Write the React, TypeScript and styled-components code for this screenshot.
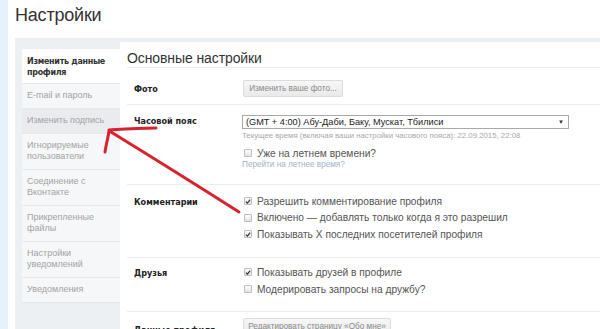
import { createGlobalStyle, styled } from "styled-components"

const GlobalStyle = createGlobalStyle`
  html, body {
    margin: 0;
    padding: 0;
    background: #ffffff;
    overflow: hidden;
  }
  body {
    font-family: "Liberation Sans", Arial, sans-serif;
  }
`

const menu = [
  { text: "Изменить данные профиля", active: true },
  { text: "E-mail и пароль" },
  { text: "Изменить подпись", hover: true },
  { text: "Игнорируемые пользователи" },
  { text: "Соединение с Вконтакте" },
  { text: "Прикрепленные файлы" },
  { text: "Настройки уведомлений" },
  { text: "Уведомления" },
]

function Check ({ checked }: { checked?: boolean }): JSX.Element {
  return (
    <Box>
      {checked && (
        <svg width="7" height="7" viewBox="0 0 7 7">
          <path d="M1 3.6 L2.8 5.4 L6 1.2" fill="none" stroke="#333" strokeWidth="1.4" />
        </svg>
      )}
    </Box>
  )
}

function App (): JSX.Element {
  return (
    <Page>
      <GlobalStyle />
      <Strip />
      <Content>
        <Title>Настройки</Title>
        <Panel>
          <Sidebar>
            {menu.map((item) => (
              <MenuItem key={item.text} active={item.active} hover={item.hover}>
                {item.text}
              </MenuItem>
            ))}
          </Sidebar>
          <Main>
            <MainTitle>Основные настройки</MainTitle>
            <Row pad={12} height={37}>
              <Label>Фото</Label>
              <Controls>
                <Button width={100}>Изменить ваше фото...</Button>
              </Controls>
            </Row>
            <Row pad={10} height={80}>
              <Label top={1}>Часовой пояс</Label>
              <Controls>
                <Select>
                  <span>(GMT + 4:00) Абу-Даби, Баку, Мускат, Тбилиси</span>
                  <Caret>▼</Caret>
                </Select>
                <Hint>Текущее время (включая ваши настройки часового пояса): 22.09.2015, 22:08</Hint>
                <CheckRow top={6}>
                  <Check />
                  <span>Уже на летнем времени?</span>
                </CheckRow>
                <LinkText>Перейти на летнее время?</LinkText>
              </Controls>
            </Row>
            <Row pad={10} height={73}>
              <Label top={2}>Комментарии</Label>
              <Controls>
                <CheckRow>
                  <Check checked />
                  <span>Разрешить комментирование профиля</span>
                </CheckRow>
                <CheckRow top={4.5}>
                  <Check />
                  <span>Включено — добавлять только когда я это разрешил</span>
                </CheckRow>
                <CheckRow top={4.5}>
                  <Check checked />
                  <span>Показывать X последних посетителей профиля</span>
                </CheckRow>
              </Controls>
            </Row>
            <Row pad={8} height={54}>
              <Label top={2}>Друзья</Label>
              <Controls>
                <CheckRow>
                  <Check checked />
                  <span>Показывать друзей в профиле</span>
                </CheckRow>
                <CheckRow top={5}>
                  <Check />
                  <span>Модерировать запросы на дружбу?</span>
                </CheckRow>
              </Controls>
            </Row>
            <Row pad={6} height={40}>
              <Label top={7}>Данные профиля</Label>
              <Controls>
                <Button width={148}>Редактировать страницу «Обо мне»</Button>
              </Controls>
            </Row>
          </Main>
        </Panel>
      </Content>
      <Arrow width="600" height="329" viewBox="0 0 600 329">
        <g fill="none" stroke="#d8222e" strokeWidth="3" strokeLinecap="round">
          <path d="M109 130 C125 129 140 128 156 128" />
          <path d="M109 131 C108 138 106 145 105 152" />
          <path d="M111 132 C150 156 195 184 239 212" />
        </g>
      </Arrow>
    </Page>
  )
}

export default App

const Page = styled.div`
  position: relative;
  display: flex;
  width: 600px;
  height: 329px;
  overflow: hidden;
`

const Strip = styled.div`
  width: 8px;
  flex: none;
  background: #e6f2fb;
`

const Content = styled.div`
  flex: 1;
  padding-left: 7px;
  display: flex;
  flex-direction: column;
`

const Title = styled.div`
  flex: none;
  height: 38px;
  box-sizing: border-box;
  padding-top: 5px;
  font-size: 18px;
  color: #333;
  letter-spacing: -0.2px;
`

const Panel = styled.div`
  flex: 1;
  display: flex;
  background: #edf0f2;
  padding-left: 7px;
  padding-top: 4px;
`

const Sidebar = styled.div`
  width: 98px;
  flex: none;
  margin-top: 7px;
  align-self: flex-start;
  display: flex;
  flex-direction: column;
`

const MenuItem = styled.div<{ active?: boolean; hover?: boolean }>`
  padding: ${(p) => (p.active ? "7px 5px 5px 5px" : "6px 5px 7px 5px")};
  font-size: ${(p) => (p.active ? "8px" : "9px")};
  line-height: 11px;
  font-weight: ${(p) => (p.active ? "bold" : "normal")};
  font-family: ${(p) => (p.active ? "\"DejaVu Sans\", Verdana, sans-serif" : "\"Liberation Sans\", Arial, sans-serif")};
  letter-spacing: ${(p) => (p.active ? "-0.3px" : "0")};
  color: ${(p) => (p.active ? "#333" : "#a3a3a3")};
  background: ${(p) => (p.active ? "#ffffff" : p.hover ? "#e9ebee" : "#f6f7f8")};
  border-bottom: 1px solid #e6e8ea;
`

const Main = styled.div`
  flex: 1;
  background: #ffffff;
  padding-left: 7px;
  display: flex;
  flex-direction: column;
`

const MainTitle = styled.div`
  flex: none;
  height: 26px;
  box-sizing: border-box;
  padding-top: 8px;
  font-size: 14px;
  line-height: 16px;
  letter-spacing: -0.1px;
  color: #333;
  border-bottom: 1px solid #ececec;
`

const Row = styled.div<{ pad: number; height: number }>`
  display: flex;
  height: ${(p) => p.height}px;
  box-sizing: border-box;
  padding: ${(p) => p.pad}px 0 0 7px;
  border-bottom: 1px solid #ececec;
  flex: none;
`

const Label = styled.div<{ top?: number }>`
  width: 108px;
  flex: none;
  padding-top: ${(p) => p.top ?? 4}px;
  font-family: "DejaVu Sans", Verdana, sans-serif;
  font-weight: bold;
  font-size: 8.1px;
  line-height: 11px;
  color: #222;
`

const Controls = styled.div`
  display: flex;
  flex-direction: column;
  align-items: flex-start;
  font-size: 10px;
  color: #555;
`

const Button = styled.div<{ width: number }>`
  width: ${(p) => p.width}px;
  height: 17px;
  box-sizing: border-box;
  margin-left: 1px;
  border: 1px solid #dcdcdc;
  border-radius: 2px;
  background: linear-gradient(#f7f7f7, #e9e9e9);
  color: #8a8a8a;
  font-size: 8.2px;
  line-height: 15px;
  text-align: center;
  white-space: nowrap;
  overflow: hidden;
`

const Select = styled.div`
  width: 327px;
  height: 14px;
  box-sizing: border-box;
  border: 1px solid #a9a9a9;
  background: #fff;
  display: flex;
  justify-content: space-between;
  align-items: center;
  padding: 0 4px 0 3px;
  font-size: 9.2px;
  color: #222;
`

const Caret = styled.span`
  font-size: 6px;
  color: #333;
`

const Hint = styled.div`
  margin-top: 1px;
  font-size: 7.8px;
  line-height: 11px;
  color: #a8a8a8;
`

const CheckRow = styled.div<{ top?: number }>`
  display: flex;
  align-items: center;
  gap: 5px;
  margin-top: ${(p) => p.top ?? 0}px;
  margin-left: 2px;
  height: 12px;
  font-size: 10.2px;
  color: #555;
  white-space: nowrap;
`

const Box = styled.span`
  width: 8px;
  height: 8px;
  box-sizing: border-box;
  border: 1px solid #bdbdbd;
  border-radius: 1px;
  background: linear-gradient(#fdfdfd, #e4e4e4);
  display: flex;
  align-items: center;
  justify-content: center;
`

const LinkText = styled.div`
  margin-top: 0px;
  font-size: 8.2px;
  line-height: 11px;
  color: #9fb3c6;
`

const Arrow = styled.svg`
  position: absolute;
  left: 0;
  top: 0;
  pointer-events: none;
`
